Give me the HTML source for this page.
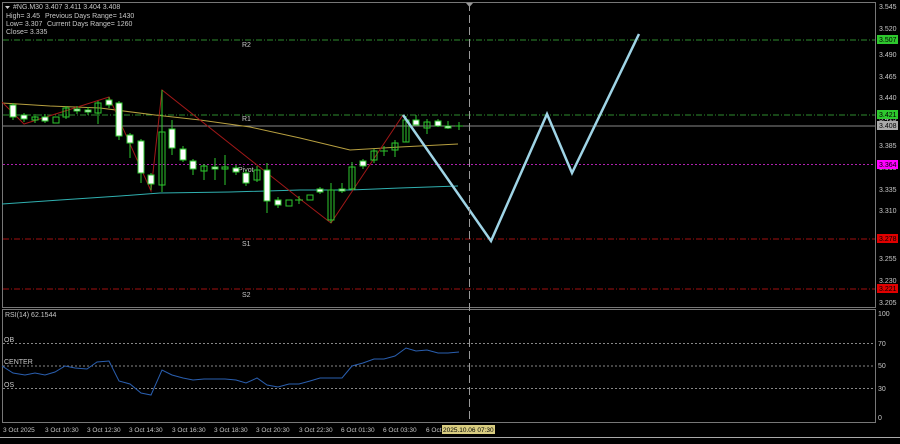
<!DOCTYPE html><html><head><style>
body{margin:0;background:#000;width:900px;height:439px;overflow:hidden;font-family:"Liberation Sans",sans-serif}
svg text{font-family:"Liberation Sans",sans-serif;font-size:7px;fill:#c8c8c8}
</style></head><body>
<svg width="900" height="439" viewBox="0 0 900 439" xmlns="http://www.w3.org/2000/svg">
<rect width="900" height="439" fill="#000"/>
<rect x="2.5" y="2.5" width="873" height="305" fill="none" stroke="#777" stroke-width="1"/>
<rect x="2.5" y="309.5" width="873" height="113" fill="none" stroke="#777" stroke-width="1"/>
<line x1="0" y1="437.5" x2="900" y2="437.5" stroke="#aaa"/>
<line x1="3" y1="40" x2="875" y2="40" stroke="#2e8b2e" stroke-dasharray="6,2,1,2"/>
<line x1="3" y1="115" x2="875" y2="115" stroke="#2e8b2e" stroke-dasharray="6,2,1,2"/>
<line x1="3" y1="126" x2="875" y2="126" stroke="#888"/>
<line x1="3" y1="164.5" x2="875" y2="164.5" stroke="#b020b0" stroke-dasharray="2,2"/>
<line x1="3" y1="239" x2="875" y2="239" stroke="#a01010" stroke-dasharray="6,2,1,2"/>
<line x1="3" y1="289" x2="875" y2="289" stroke="#a01010" stroke-dasharray="6,2,1,2"/>
<text x="242" y="47">R2</text><text x="242" y="121">R1</text><text x="238" y="172">Pivot</text><text x="242" y="246">S1</text><text x="242" y="297">S2</text>
<polyline fill="none" stroke="#b8a040" stroke-width="1" points="2,103 50,106 100,108 155,115 200,120 250,127 300,138 350,150 400,147 458,144"/>
<polyline fill="none" stroke="#30b0b0" stroke-width="1" points="2,204 60,200 120,196 160,193 230,192 300,190 350,190 400,188 458,186"/>
<polyline fill="none" stroke="#a01818" stroke-width="1" points="2,102 24,124 109,97 151,191 162,90 300,199 331,223 403,115"/>
<g stroke="#2ec82e" stroke-width="1">
<line x1="13" y1="103" x2="13" y2="120"/><rect x="10" y="105" width="6" height="12" fill="#fff"/>
<line x1="24" y1="113" x2="24" y2="122"/><rect x="21" y="115" width="6" height="4" fill="#fff"/>
<line x1="35" y1="114" x2="35" y2="123"/><rect x="32" y="117" width="6" height="3" fill="none"/>
<line x1="45" y1="114" x2="45" y2="123"/><rect x="42" y="117" width="6" height="4" fill="#fff"/>
<rect x="53" y="117" width="6" height="6" fill="none"/>
<line x1="66" y1="106" x2="66" y2="119"/><rect x="63" y="108" width="6" height="9" fill="none"/>
<line x1="77" y1="106" x2="77" y2="114"/><rect x="74" y="109" width="6" height="2" fill="#fff"/>
<line x1="88" y1="107" x2="88" y2="115"/><rect x="85" y="110" width="6" height="2" fill="#fff"/>
<line x1="98" y1="101" x2="98" y2="124"/><rect x="95" y="103" width="6" height="10" fill="none"/>
<line x1="109" y1="97" x2="109" y2="108"/><rect x="106" y="100" width="6" height="5" fill="#fff"/>
<line x1="119" y1="101" x2="119" y2="140"/><rect x="116" y="103" width="6" height="33" fill="#fff"/>
<line x1="130" y1="133" x2="130" y2="158"/><rect x="127" y="135" width="6" height="8" fill="#fff"/>
<line x1="141" y1="139" x2="141" y2="183"/><rect x="138" y="141" width="6" height="32" fill="#fff"/>
<line x1="151" y1="173" x2="151" y2="190"/><rect x="148" y="175" width="6" height="9" fill="#fff"/>
<line x1="162" y1="90" x2="162" y2="192"/><rect x="159" y="132" width="6" height="53" fill="none"/>
<line x1="172" y1="120" x2="172" y2="155"/><rect x="169" y="129" width="6" height="19" fill="#fff"/>
<line x1="183" y1="146" x2="183" y2="162"/><rect x="180" y="149" width="6" height="11" fill="#fff"/>
<line x1="193" y1="159" x2="193" y2="175"/><rect x="190" y="161" width="6" height="8" fill="#fff"/>
<line x1="204" y1="164" x2="204" y2="180"/><rect x="201" y="166" width="6" height="5" fill="none"/>
<line x1="215" y1="158" x2="215" y2="180"/><rect x="212" y="167" width="6" height="2" fill="#fff"/>
<line x1="225" y1="155" x2="225" y2="185"/><rect x="222" y="167" width="6" height="2" fill="none"/>
<line x1="236" y1="165" x2="236" y2="175"/><rect x="233" y="168" width="6" height="4" fill="#fff"/>
<line x1="246" y1="170" x2="246" y2="186"/><rect x="243" y="173" width="6" height="10" fill="#fff"/>
<line x1="257" y1="166" x2="257" y2="182"/><rect x="254" y="170" width="6" height="10" fill="none"/>
<line x1="267" y1="163" x2="267" y2="213"/><rect x="264" y="170" width="6" height="31" fill="#fff"/>
<line x1="278" y1="197" x2="278" y2="208"/><rect x="275" y="200" width="6" height="5" fill="#fff"/>
<rect x="286" y="200" width="6" height="6" fill="none"/>
<line x1="299" y1="196" x2="299" y2="204"/><line x1="295" y1="200" x2="303" y2="200"/>
<rect x="307" y="195" width="6" height="5" fill="none"/>
<line x1="320" y1="187" x2="320" y2="194"/><rect x="317" y="189" width="6" height="3" fill="#fff"/>
<line x1="331" y1="183" x2="331" y2="223"/><rect x="328" y="190" width="6" height="30" fill="none"/>
<line x1="342" y1="183" x2="342" y2="193"/><rect x="339" y="189" width="6" height="2" fill="#fff"/>
<line x1="352" y1="162" x2="352" y2="190"/><rect x="349" y="167" width="6" height="22" fill="none"/>
<line x1="363" y1="159" x2="363" y2="169"/><rect x="360" y="161" width="6" height="5" fill="#fff"/>
<line x1="374" y1="149" x2="374" y2="163"/><rect x="371" y="151" width="6" height="9" fill="none"/>
<line x1="384" y1="146" x2="384" y2="156"/><line x1="380" y1="151" x2="388" y2="151"/>
<line x1="395" y1="140" x2="395" y2="157"/><rect x="392" y="143" width="6" height="7" fill="none"/>
<line x1="406" y1="116" x2="406" y2="142"/><rect x="403" y="120" width="6" height="22" fill="none"/>
<line x1="416" y1="115" x2="416" y2="125"/><rect x="413" y="120" width="6" height="5" fill="#fff"/>
<line x1="427" y1="119" x2="427" y2="134"/><rect x="424" y="122" width="6" height="6" fill="none"/>
<line x1="438" y1="119" x2="438" y2="127"/><rect x="435" y="121" width="6" height="5" fill="#fff"/>
<line x1="448" y1="121" x2="448" y2="129"/><rect x="445" y="126" width="6" height="2" fill="#fff"/>
<line x1="459" y1="122" x2="459" y2="130"/><line x1="455" y1="126" x2="463" y2="126"/>
</g>
<polyline fill="none" stroke="#9fd4e6" stroke-width="2.5" points="403,115 491,241 547,114 572,173 639,34"/>
<line x1="469.5" y1="3" x2="469.5" y2="423" stroke="#999" stroke-dasharray="8,4"/>
<polygon points="466,3 473,3 469.5,7" fill="#999"/>
<polygon points="5,6 10,6 7.5,9" fill="#ccc"/>
<text x="13" y="9">#NG.M30  3.407 3.411 3.404 3.408</text>
<text x="6" y="18">High= 3.45</text><text x="45" y="18">Previous Days Range= 1430</text>
<text x="6" y="26">Low= 3.307</text><text x="47" y="26">Current Days Range= 1260</text>
<text x="6" y="34">Close= 3.335</text>
<g fill="#bbb">
<text x="879" y="9">3.545</text><text x="879" y="31">3.520</text><text x="879" y="57">3.490</text><text x="879" y="79">3.465</text><text x="879" y="100">3.440</text><text x="879" y="121">3.415</text><text x="879" y="148">3.385</text><text x="879" y="170">3.360</text><text x="879" y="192">3.335</text><text x="879" y="213">3.310</text><text x="879" y="261">3.255</text><text x="879" y="283">3.230</text><text x="879" y="305">3.205</text>
</g>
<rect x="877" y="35" width="21" height="9" fill="#2ec82e"/><text x="879" y="42" style="fill:#000">3.507</text>
<rect x="877" y="110" width="21" height="9" fill="#2ec82e"/><text x="879" y="117" style="fill:#000">3.421</text>
<rect x="877" y="121" width="21" height="9" fill="#aaa"/><text x="879" y="128" style="fill:#000">3.408</text>
<rect x="877" y="160" width="21" height="9" fill="#ff00ff"/><text x="879" y="167" style="fill:#000">3.364</text>
<rect x="877" y="234" width="21" height="9" fill="#e00000"/><text x="879" y="241" style="fill:#000">3.278</text>
<rect x="877" y="284" width="21" height="9" fill="#e00000"/><text x="879" y="291" style="fill:#000">3.221</text>
<line x1="3" y1="343.5" x2="875" y2="343.5" stroke="#888" stroke-dasharray="2,2"/>
<line x1="3" y1="366" x2="875" y2="366" stroke="#888" stroke-dasharray="2,2"/>
<line x1="3" y1="388.5" x2="875" y2="388.5" stroke="#888" stroke-dasharray="2,2"/>
<text x="5" y="317">RSI(14) 62.1544</text>
<text x="4" y="342">OB</text><text x="4" y="364">CENTER</text><text x="4" y="387">OS</text>
<polyline fill="none" stroke="#2a5fb0" stroke-width="1" points="2,366 13,373 25,375 35,373 45,375 55,372 65,366 75,368 87,369 97,362 109,361 119,381 130,384 141,393 151,395 162,370 172,375 183,378 193,380 204,379 215,379 225,379 236,380 246,383 257,378 267,385 278,387 289,384 299,384 310,381 320,378 331,378 342,378 352,366 363,363 374,359 384,359 395,356 406,348 416,351 427,350 438,353 448,353 459,352"/>
<g fill="#bbb"><text x="878" y="316">100</text><text x="878" y="346">70</text><text x="878" y="368">50</text><text x="878" y="391">30</text><text x="878" y="420">0</text></g>
<g fill="#bbb" style="font-size:6.5px">
<text x="3" y="432" style="font-size:6.5px">3 Oct 2025</text><text x="45" y="432" style="font-size:6.5px">3 Oct 10:30</text><text x="87" y="432" style="font-size:6.5px">3 Oct 12:30</text><text x="129" y="432" style="font-size:6.5px">3 Oct 14:30</text><text x="172" y="432" style="font-size:6.5px">3 Oct 16:30</text><text x="214" y="432" style="font-size:6.5px">3 Oct 18:30</text><text x="256" y="432" style="font-size:6.5px">3 Oct 20:30</text><text x="299" y="432" style="font-size:6.5px">3 Oct 22:30</text><text x="341" y="432" style="font-size:6.5px">6 Oct 01:30</text><text x="383" y="432" style="font-size:6.5px">6 Oct 03:30</text><text x="426" y="432" style="font-size:6.5px">6 Oct</text>
</g>
<rect x="442" y="425" width="53" height="9" fill="#d8cc80"/><text x="443" y="432" style="fill:#000;font-size:6.5px">2025.10.06 07:30</text>
</svg>
</body></html>
